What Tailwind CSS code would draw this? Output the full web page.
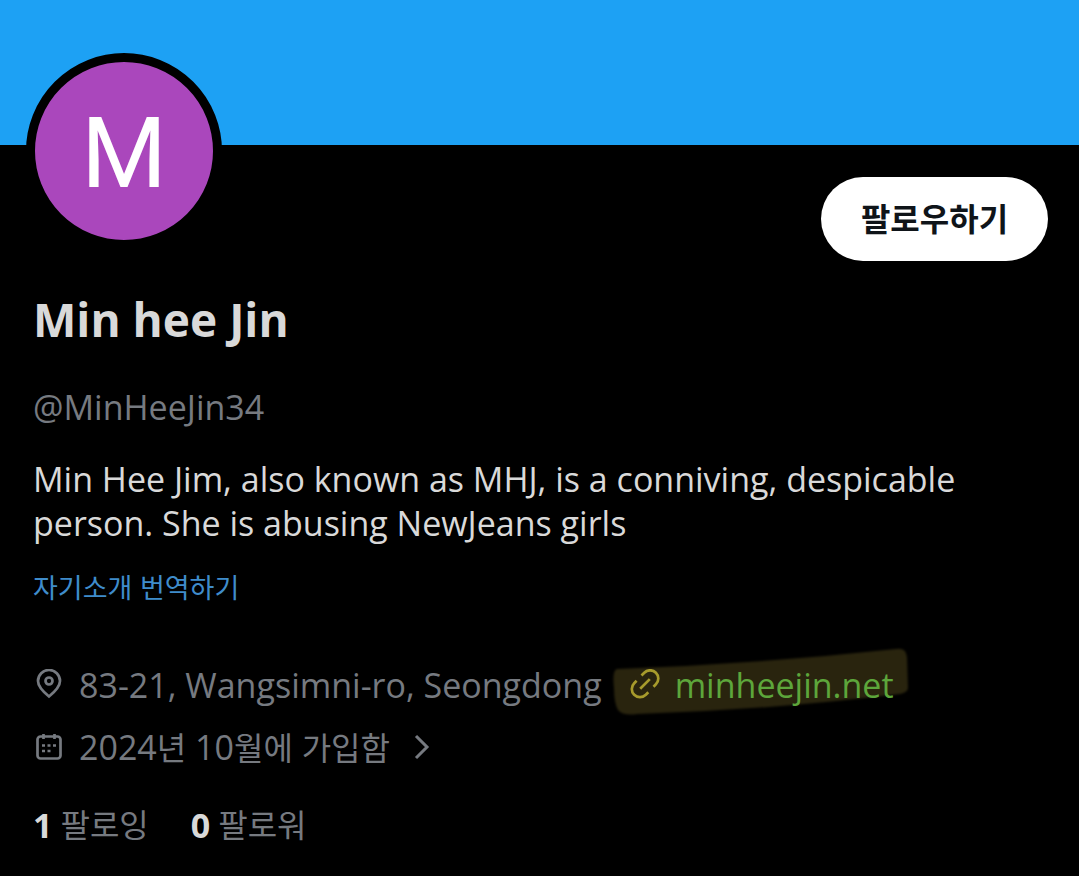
<!DOCTYPE html>
<html lang="ko">
<head>
<meta charset="utf-8">
<meta name="viewport" content="width=device-width, initial-scale=1">
<title>Min hee Jin</title>
<script src="https://cdn.jsdelivr.net/npm/@tailwindcss/browser@4"></script>
</head>
<body class="min-h-screen bg-black font-['Open_Sans','Noto_Sans_CJK_KR',sans-serif] text-[34px] leading-[44px] text-[#767a80]">
<header class="h-[145px] bg-[#1da1f4]"></header>
<main class="pr-[31px] pl-[33px]">
  <div class="-mt-[92px] flex items-end justify-between">
    <div class="-ml-[7px] mb-3 flex size-[196px] items-center justify-center rounded-full border-[9px] border-black bg-[#aa47bc] pt-1.5 font-[Roboto] text-[98px] leading-none text-white">M</div>
    <button class="h-[84px] w-[227px] rounded-full bg-white pb-1 font-['Noto_Sans_CJK_KR',sans-serif] text-[32px] font-bold text-[#0f1419]">팔로우하기</button>
  </div>
  <h1 class="mt-[30px] text-[46px] leading-[56px] font-bold text-[#d9d9d9]">Min hee Jin</h1>
  <p class="mt-[38px]">@MinHeeJin34</p>
  <p class="mt-7 text-[#d9d9d9]">Min Hee Jim, also known as MHJ, is a conniving, despicable<br>person. She is abusing NewJeans girls</p>
  <a href="#" class="mt-5 block w-fit font-['Noto_Sans_CJK_KR',sans-serif] text-[27px] text-[#3f8ccb]">자기소개 번역하기</a>
  <div class="mt-[54px] flex items-center">
    <svg class="mr-[14px] size-8 shrink-0" viewBox="0 0 32 32" fill="none" stroke="currentColor" stroke-width="2.7"><path d="M16 27.500Q5 18.500 5 12a11 11 0 0 1 22 0q0 6.500-11 15.500z"/><circle cx="16" cy="12" r="3.500"/></svg>
    <span class="whitespace-nowrap">83-21, Wangsimni-ro, Seongdong</span>
    <a href="#" class="relative ml-[27px] flex items-center gap-[14px] whitespace-nowrap text-[#5da63b]">
      <svg class="absolute -top-[17px] -left-[22px] h-[72px] w-[304px] max-w-none" viewBox="0 0 304 72" fill="#29240e"><path class="blur-[1px]" d="M10 23Q150 18 289 3q10-2 11 8l1 31q0 4-8 6Q160 64 30 68q-14 2-19-4Q7 57 7 42 5 24 10 23z"/></svg>
      <svg class="relative size-8 shrink-0" viewBox="0 0 32 32" fill="none" stroke="#a79b2c" stroke-width="2.700"><path d="M12.500 6.500l2.800-2.800a8.200 8.200 0 0 1 11.600 11.600l-2.400 2.400M7.600 11.800l-2.400 2.400a8.200 8.200 0 0 0 11.600 11.600l2.500-2.500M11.200 19.700l9.600-9.600"/></svg>
      <span class="relative">minheejin.net</span>
    </a>
  </div>
  <a href="#" class="mt-[18px] flex w-fit items-center">
    <svg class="mr-[14px] size-8 shrink-0" viewBox="0 0 32 32" fill="none" stroke="currentColor" stroke-width="2.700"><rect x="4.500" y="4.500" width="23" height="22" rx="3"/><path d="M10.500 2v5M21.500 2v5M9 13.500h3M14.500 13.500h3M20 13.500h3M9 19h3M14.500 19h3"/></svg>
    <span class="whitespace-nowrap">2024<span class="text-[32px]">년</span> 10<span class="text-[32px]">월에</span> <span class="text-[32px]">가입함</span></span>
    <svg class="ml-6 h-7 w-4" viewBox="0 0 16 28" fill="none" stroke="currentColor" stroke-width="3"><path d="M2 2l11 11L2 24"/></svg>
  </a>
  <nav class="mt-[33px] flex gap-[42px] text-[32px]">
    <a href="#" class="flex gap-2"><b class="text-[34px] text-[#d9d9d9]">1</b>팔로잉</a>
    <a href="#" class="flex gap-2"><b class="text-[34px] text-[#d9d9d9]">0</b>팔로워</a>
  </nav>
</main>
</body>
</html>
